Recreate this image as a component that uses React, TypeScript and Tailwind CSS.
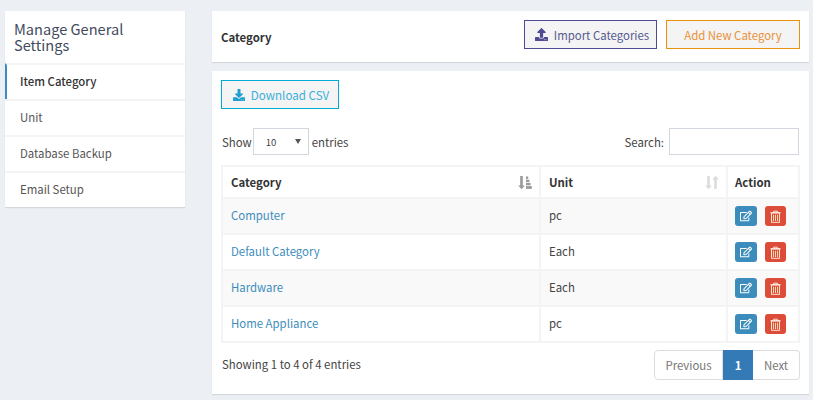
import { FaUpload, FaDownload, FaRegEdit } from "react-icons/fa";

const font = { fontFamily: '"Noto Sans CJK SC", "Noto Sans", sans-serif' };

const SortDown = () => (
  <svg width="14" height="15" viewBox="0 0 14 14" fill="#9a9a9a">
    <path d="M2.200 .5h2.600v9.500h2L3.500 13.800 .2 10h2z" />
    <rect x="8" y="1" width="2.200" height="2.400" />
    <rect x="8" y="4.200" width="3.400" height="2.400" />
    <rect x="8" y="7.400" width="4.600" height="2.400" />
    <rect x="8" y="10.600" width="5.800" height="2.800" />
  </svg>
);

const SortBoth = () => (
  <svg width="14" height="15" viewBox="0 0 14 14" fill="#dcdcdc">
    <path d="M2.200 .5h2.600v9.500h2L3.500 13.800 .2 10h2z" />
    <path d="M9.200 13.500h2.600V4h2L10.500 .2 7.200 4h2z" />
  </svg>
);

const Trash = () => (
  <svg width="11" height="13" viewBox="0 0 12 14" fill="none" stroke="#fff3e6" strokeWidth="1">
    <path d="M.5 3h11" strokeWidth="1.200" />
    <path d="M4 3V1.200h4V3" />
    <rect x="1.700" y="3" width="8.600" height="10.300" />
    <path d="M3.800 5v7M6 5v7M8.200 5v7" stroke="#fbd7a8" strokeWidth="1.100" />
  </svg>
);

const rows = [
  ["Computer", "pc"],
  ["Default Category", "Each"],
  ["Hardware", "Each"],
  ["Home Appliance", "pc"],
];

const menu = ["Item Category", "Unit", "Database Backup", "Email Setup"];

export default function App() {
  return (
    <div style={font} className="w-[813px] h-[400px] overflow-hidden bg-[#ecf0f5] flex gap-[27px] pl-[5px] pt-[11px] text-[11.4px] leading-[20px] text-[#444]">
      <aside className="w-[180px] h-[196px] shrink-0 bg-white shadow-[0_1px_1px_rgba(0,0,0,0.1)]">
        <h3 className="h-[52px] px-[9px] pt-[10px] text-[14.6px] leading-[16px] text-[#444b5c]">Manage General Settings</h3>
        <ul>
          {menu.map((m, i) => (
            <li
              key={m}
              className={`h-[36px] border-t-2 border-[#f4f4f4] flex items-center pb-[2px] text-[11.4px] ${
                i === 0 ? "border-l-2 border-l-[#3c8dbc] pl-[13px] text-[#333] font-medium" : "pl-[15px] text-[#555]"
              }`}
            >
              {m}
            </li>
          ))}
        </ul>
      </aside>

      <main className="w-[597px] flex flex-col gap-[9px]">
        <section className="h-[51px] bg-white shadow-[0_1px_1px_rgba(0,0,0,0.1)] flex items-start pt-[9px] pl-[9px] pr-[9px]">
          <h2 className="font-bold text-[11.4px] text-[#333] flex-1 self-center mb-[9px]">Category</h2>
          <button className="h-[29px] w-[133px] mr-[9px] border border-[#4f4a94] bg-[#f4f4f4] text-[#555a8e] flex items-center justify-center gap-[6px] pl-[3px] text-[11.4px] whitespace-nowrap">
            <FaUpload className="text-[#4f4a94] text-[13px]" />
            Import Categories
          </button>
          <button className="h-[29px] w-[134px] border border-[#e8930c] bg-[#f4f4f4] text-[#e8923a] text-[11.4px] whitespace-nowrap">
            Add New Category
          </button>
        </section>

        <section className="h-[323px] bg-white shadow-[0_1px_1px_rgba(0,0,0,0.1)] pt-[9px] pl-[9px] pr-[10px]">
          <button className="h-[29px] w-[118px] border border-[#00acd6] bg-[#f4f4f4] text-[#3aaed8] flex items-center justify-center gap-[6px] pl-[2px] text-[11.6px] whitespace-nowrap">
            <FaDownload className="text-[#1e9fcf] text-[12px]" />
            Download CSV
          </button>

          <div className="mt-[19px] flex items-center justify-between pl-[1px] h-[27px]">
            <div className="flex items-center">
              <span>Show</span>
              <div className="ml-[1px] h-[27px] w-[56px] border border-[#d2d6de] flex items-center justify-between pl-[12px] pr-[7px] text-[9.6px]">
                <span>10</span>
                <span className="w-0 h-0 border-x-[3px] border-x-transparent border-t-[5px] border-t-[#555]" />
              </div>
              <span className="ml-[3px]">entries</span>
            </div>
            <div className="flex items-center gap-[5px]">
              <span>Search:</span>
              <input className="h-[27px] w-[130px] border border-[#d2d6de] bg-white outline-none" />
            </div>
          </div>

          <table className="mt-[10px] w-[577px] table-fixed border-collapse border-2 border-[#f4f4f4]">
            <colgroup>
              <col className="w-[318px]" />
              <col className="w-[187px]" />
              <col className="w-[72px]" />
            </colgroup>
            <thead>
              <tr className="h-[32px] text-[#333]">
                <th className="border-2 border-[#f4f4f4] pl-[8px] pr-[7px] text-left font-bold">
                  <div className="flex items-center justify-between">Category <SortDown /></div>
                </th>
                <th className="border-2 border-[#f4f4f4] pl-[8px] pr-[7px] text-left font-bold">
                  <div className="flex items-center justify-between">Unit <SortBoth /></div>
                </th>
                <th className="border-2 border-[#f4f4f4] px-[7px] text-left font-bold">Action</th>
              </tr>
            </thead>
            <tbody>
              {rows.map((r, i) => (
                <tr key={r[0]} className={`h-[36px] ${i % 2 === 0 ? "bg-[#f9f9f9]" : "bg-white"}`}>
                  <td className="border-2 border-[#f4f4f4] pl-[8px] pr-[7px] text-[#3c8dbc] pb-[2px]">{r[0]}</td>
                  <td className="border-2 border-[#f4f4f4] pl-[8px] pr-[7px] text-[#444] pb-[2px]">{r[1]}</td>
                  <td className="border-2 border-[#f4f4f4] px-[7px]">
                    <div className="flex gap-[8px]">
                      <span className="w-[22px] h-[20px] rounded-[3px] bg-[#3c8dbc] flex items-center justify-center text-white text-[12px]"><FaRegEdit /></span>
                      <span className="w-[21px] h-[20px] rounded-[3px] bg-[#dd4b39] flex items-center justify-center"><Trash /></span>
                    </div>
                  </td>
                </tr>
              ))}
            </tbody>
          </table>

          <div className="mt-[7px] flex items-start justify-between">
            <span className="mt-[4px] ml-[1px]">Showing 1 to 4 of 4 entries</span>
            <nav className="flex h-[30px] mr-[-1px]">
              <span className="w-[69px] border border-[#ddd] rounded-l-[4px] flex items-center justify-center text-[#777]">Previous</span>
              <span className="w-[30px] bg-[#337ab7] text-white font-bold flex items-center justify-center">1</span>
              <span className="w-[47px] border border-[#ddd] border-l-0 rounded-r-[4px] flex items-center justify-center text-[#777]">Next</span>
            </nav>
          </div>
        </section>
      </main>
    </div>
  );
}
